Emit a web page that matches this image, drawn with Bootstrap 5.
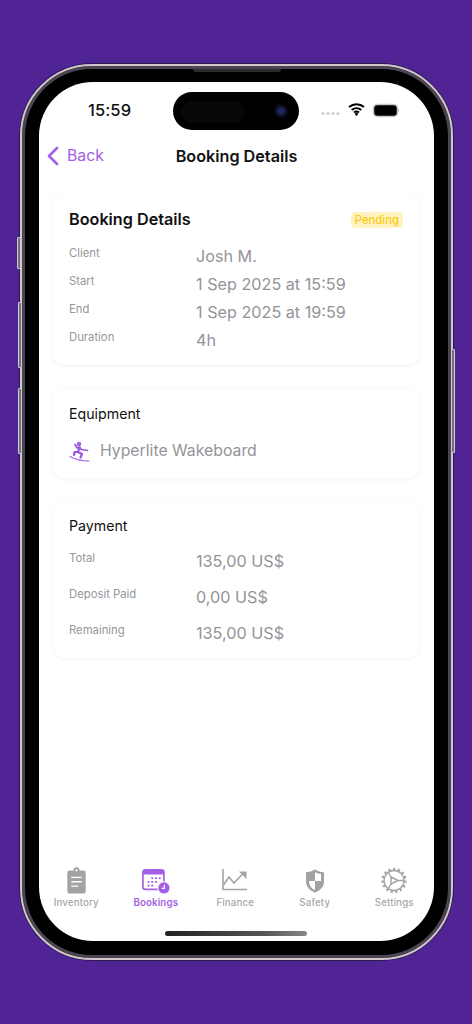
<!DOCTYPE html>
<html lang="en">
<head>
<meta charset="utf-8">
<title>Booking Details</title>
<link href="https://cdn.jsdelivr.net/npm/bootstrap@5.3.0/dist/css/bootstrap.min.css" rel="stylesheet">
<style>
html,body{height:1024px;overflow:hidden}
body{background:#502494;font-family:Inter,"Liberation Sans",sans-serif;padding:64px 19px 0 20px}
.phone-shell{position:relative;width:433px;height:896px;border-radius:72px;background:#000;padding:18px 19px 19px 19px;border:2px solid #cfc8cd;box-shadow:inset 0 0 0 3px #4c4453,0 0 0 1px #2c1a4e}
.side-key{position:absolute;background:#77707f;border:1px solid #cfc8cd;border-radius:1px;width:4px}
.key-mute{left:-5px;top:171px;height:32px}
.key-up{left:-4px;top:236px;height:66px}
.key-down{left:-4px;top:322px;height:66px}
.key-power{right:-4px;top:283px;height:104px}
.ear-slot{position:absolute;top:3px;left:171px;width:88px;height:3px;background:#2b2b30;border-radius:0 0 3px 3px}
.phone-screen{position:relative;height:859px;width:395px;margin-top:-2px;margin-left:-2px;background:#fff;border-radius:54px;overflow:hidden;display:flex;flex-direction:column}
.status-row{height:56px;flex:none;padding:20px 35px 0 49px}
.clock{font-size:16.5px;font-weight:500;color:#111;line-height:17px;letter-spacing:.1px}
.island{position:absolute;top:10px;left:134px;width:126px;height:38px;background:#000;border-radius:19px}
.island-pill{position:absolute;left:8px;top:9px;width:64px;height:22px;border-radius:11px;background:#070707}
.island-cam{position:absolute;right:11px;top:12px;width:14px;height:14px;border-radius:50%;background:radial-gradient(circle,#1e2a66 0 22%,#0b0b16 55%)}
.nav-row{height:36px;flex:none;position:relative;padding-left:7px}
.back-text{color:#a45fe6;font-size:15.8px;line-height:36px}
.nav-title{position:absolute;inset:0;text-align:center;font-size:16.2px;font-weight:600;color:#111;line-height:36px}
.content-area{padding:19px 15px 0 14px;flex:1 1 auto}
.info-card{border:0;border-radius:12px;background:#fff;box-shadow:0 1px 5px rgba(0,0,0,.06);padding:0 16px;margin-bottom:24px}
.card-a{height:172px;padding-top:15px}
.card-b{height:89px;padding-top:15px}
.card-c{height:156px;padding-top:14px}
.card-heading{font-size:16.2px;font-weight:600;color:#111;line-height:22px}
.sub-heading{font-size:14.2px;font-weight:400;color:#111;line-height:20px}
.pending-pill{font-size:11.3px;line-height:16px;color:#fdc90f;background:#fff3c4;border-radius:4px;padding:0 4px;font-weight:500;margin-top:4px}
.info-line{display:flex}
.line-label{width:127px;flex:none;font-size:11.3px;color:#96969b;line-height:16px}
.line-value{font-size:16.2px;color:#949499;line-height:20px}
.lines-a{padding-top:14px}
.lines-a .info-line{height:28px}
.lines-a .line-label{margin-top:1px}
.lines-a .line-value{margin-top:2px}
.lines-c{padding-top:10px}
.lines-c .info-line{height:36px}
.lines-c .line-value{margin-top:5px}
.lines-c .line-label{margin-top:4px}
.equip-line{display:flex;align-items:center;gap:10px;margin-top:16px}
.equip-name{font-size:15.8px;color:#949499;line-height:22px}
.tab-row{flex:none;height:59px;display:flex;padding-top:9px;margin-bottom:25px;margin-left:-2.5px}
.tab-item{width:79.5px;flex:none;display:flex;flex-direction:column;align-items:center;color:#a8a8a8;font-size:9.7px;font-weight:500;line-height:12px;letter-spacing:.15px}
.tab-item svg{display:block;margin-bottom:3px}
.tab-on{color:#a45fe6;font-weight:600}
.home-bar{position:absolute;left:126px;bottom:5px;width:142px;height:5px;border-radius:3px;background:linear-gradient(90deg,#222,#555 70%,#888)}
</style>
</head>
<body>
<div class="phone-shell">
  <span class="side-key key-mute"></span><span class="side-key key-up"></span><span class="side-key key-down"></span><span class="side-key key-power"></span>
  <span class="ear-slot"></span>
  <div class="phone-screen">
    <div class="status-row d-flex justify-content-between">
      <span class="clock">15:59</span>
      <svg width="78" height="16" viewBox="0 0 78 16">
        <g fill="#cfcfcf"><circle cx="2" cy="11.500" r="1.600"/><circle cx="7" cy="11.500" r="1.600"/><circle cx="12" cy="11.500" r="1.600"/><circle cx="17" cy="11.500" r="1.600"/></g>
        <path d="M28 5a11.500 11.500 0 0 1 15 0M30.700 7.900a7.500 7.500 0 0 1 9.600 0M33 10.500a4 4 0 0 1 5 0" fill="none" stroke="#000" stroke-width="2"/>
        <path d="M33.600 11.900 35.500 10.500l1.900 1.400-1.900 2z" fill="#000"/>
        <rect x="52.500" y="2.500" width="24" height="12" rx="4" fill="#000" stroke="#c8c8c8" stroke-width="1.500"/>
        <path d="M77 6.500c1 .4 1 3.600 0 4z" fill="#aaa"/>
      </svg>
    </div>
    <div class="island"><span class="island-pill"></span><span class="island-cam"></span></div>
    <div class="nav-row d-flex align-items-center gap-2">
      <svg width="13" height="20" viewBox="0 0 13 20" fill="none"><path d="M11 2 3 10l8 8" stroke="#a45fe6" stroke-width="2.600" stroke-linecap="round" stroke-linejoin="round"/></svg>
      <span class="back-text">Back</span>
      <div class="nav-title">Booking Details</div>
    </div>
    <div class="content-area">
      <section class="card info-card card-a">
        <div class="d-flex justify-content-between align-items-start">
          <span class="card-heading">Booking Details</span>
          <span class="pending-pill">Pending</span>
        </div>
        <div class="lines-a">
          <div class="info-line"><span class="line-label">Client</span><span class="line-value">Josh M.</span></div>
          <div class="info-line"><span class="line-label">Start</span><span class="line-value">1 Sep 2025 at 15:59</span></div>
          <div class="info-line"><span class="line-label">End</span><span class="line-value">1 Sep 2025 at 19:59</span></div>
          <div class="info-line"><span class="line-label">Duration</span><span class="line-value">4h</span></div>
        </div>
      </section>
      <section class="card info-card card-b">
        <div class="sub-heading">Equipment</div>
        <div class="equip-line">
          <svg width="21" height="21" viewBox="0 0 21 21" fill="none">
            <circle cx="10" cy="3" r="2.300" fill="#a45fe6"/>
            <path d="M6 3.500 8 7l2.500-1 2 2.500 6 1" stroke="#9a55df" stroke-width="1.700" stroke-linejoin="round" stroke-linecap="round"/>
            <path d="M10.500 6.500 9 11l4 2-1.500 3.500M9 11 5.500 11 5 14" stroke="#9a55df" stroke-width="2.200" stroke-linejoin="round" stroke-linecap="round"/>
            <path d="M1 15.500c5 2.800 12 4.500 19 4.500" stroke="#a45fe6" stroke-width="1.200" stroke-linecap="round"/>
          </svg>
          <span class="equip-name">Hyperlite Wakeboard</span>
        </div>
      </section>
      <section class="card info-card card-c">
        <div class="sub-heading">Payment</div>
        <div class="lines-c">
          <div class="info-line"><span class="line-label">Total</span><span class="line-value">135,00 US$</span></div>
          <div class="info-line"><span class="line-label">Deposit Paid</span><span class="line-value">0,00 US$</span></div>
          <div class="info-line"><span class="line-label">Remaining</span><span class="line-value">135,00 US$</span></div>
        </div>
      </section>
    </div>
    <nav class="tab-row">
      <div class="tab-item">
        <svg width="21" height="28" viewBox="0 0 24 32">
          <path d="M4 5h4.500a3.500 3.500 0 0 1 7 0H20a2.500 2.500 0 0 1 2.500 2.500V29a2.500 2.500 0 0 1-2.500 2.500H4A2.500 2.500 0 0 1 1.500 29V7.500A2.500 2.500 0 0 1 4 5z" fill="#a3a3a3"/>
          <path d="M6 13h12M6 18h12M6 23h8" stroke="#fff" stroke-width="1.600"/>
          <circle cx="12" cy="5" r="1.200" fill="#fff"/>
        </svg>
        <span>Inventory</span>
      </div>
      <div class="tab-item tab-on">
        <svg width="28" height="28" viewBox="1 -2 30 30">
          <rect x="2" y="2" width="22.500" height="21" rx="2.500" fill="#fff" stroke="#a45fe6" stroke-width="1.800"/>
          <path d="M2 4.500a2.500 2.500 0 0 1 2.500-2.500h17.500a2.500 2.500 0 0 1 2.500 2.500V7H2z" fill="#a45fe6"/>
          <g fill="#a45fe6"><rect x="11" y="10" width="2" height="2"/><rect x="15" y="10" width="2" height="2"/><rect x="19" y="10" width="2" height="2"/><rect x="7" y="14" width="2" height="2"/><rect x="11" y="14" width="2" height="2"/><rect x="15" y="14" width="2" height="2"/><rect x="7" y="18" width="2" height="2"/><rect x="11" y="18" width="2" height="2"/></g>
          <circle cx="24.500" cy="21.500" r="6.500" fill="#a45fe6" stroke="#fff" stroke-width="1"/>
          <path d="M25 18v4h-3" stroke="#fff" stroke-width="1.300" fill="none"/>
        </svg>
        <span>Bookings</span>
      </div>
      <div class="tab-item">
        <svg width="26" height="28" viewBox="0 -1 26 28" fill="none">
          <path d="M1 2v20.500h24" stroke="#a3a3a3" stroke-width="1.600"/>
          <path d="M1.500 18 7 10l5 6 9-9.500" stroke="#a3a3a3" stroke-width="1.600"/>
          <path d="M17 4.500h7.500V12z" fill="#a3a3a3"/>
        </svg>
        <span>Finance</span>
      </div>
      <div class="tab-item">
        <svg width="20" height="28" viewBox="0 -3 20 32" preserveAspectRatio="none">
          <path d="M10 1c3 2 6 2.800 9 3v11c0 6-4 10-9 12.500C5 25 1 21 1 15V4c3-.2 6-1 9-3z" fill="#a3a3a3"/>
          <path d="M10 4c2 1.200 4 1.800 6 2v8h-6zM10 14v10.500C6.500 22.500 4 19 4 14z" fill="#fff"/>
        </svg>
        <span>Safety</span>
      </div>
      <div class="tab-item">
        <svg width="26" height="28" viewBox="0 -1.500 26 28" fill="none">
          <circle cx="13" cy="13" r="10" stroke="#a3a3a3" stroke-width="1.300"/>
          <circle cx="13" cy="13" r="11.500" stroke="#a3a3a3" stroke-width="2.200" stroke-dasharray="2.400 2.400"/>
          <path d="M10 9.500 17 13l-7 3.500z" stroke="#a3a3a3" stroke-width="1.400"/>
          <path d="M17 13h6M10 9.500 7 4.500M10 16.500 7 21.500" stroke="#a3a3a3" stroke-width="1.400"/>
        </svg>
        <span>Settings</span>
      </div>
    </nav>
    <span class="home-bar"></span>
  </div>
</div>
<script src="https://cdn.jsdelivr.net/npm/bootstrap@5.3.0/dist/js/bootstrap.bundle.min.js"></script>
</body>
</html>
